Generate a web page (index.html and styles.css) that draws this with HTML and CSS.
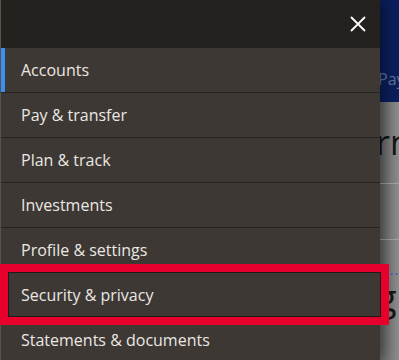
FILE: index.html
```html
<!DOCTYPE html>
<html lang="en">
<head>
    <meta charset="UTF-8">
    <meta name="viewport" content="width=device-width, initial-scale=1.0">
    <title>Menu</title>
    <link rel="stylesheet" href="styles.css">
</head>
<body>
    <div class="screen">
        <nav class="drawer">
            <div class="drawer-head">
                <button class="close" aria-label="Close menu">
                    <svg width="16" height="16" viewBox="0 0 16 16"><path d="M1 1 L15 15 M15 1 L1 15" stroke="#fff" stroke-width="1.8" fill="none"/></svg>
                </button>
            </div>
            <ul class="menu">
                <li class="item active">Accounts</li>
                <li class="item">Pay &amp; transfer</li>
                <li class="item">Plan &amp; track</li>
                <li class="item">Investments</li>
                <li class="item">Profile &amp; settings</li>
                <li class="item">Security &amp; privacy</li>
                <li class="item">Statements &amp; documents</li>
            </ul>
            <div class="highlight"></div>
        </nav>
        <div class="backdrop">
            <div class="bd-top"><span class="bd-nav">Pay &amp; transfer</span></div>
            <div class="bd-body">
                <div class="bd-title">rn</div>
                <div class="bd-rule"></div>
                <div class="bd-rule second"></div>
                <div class="bd-link">/....</div>
                <div class="bd-big">g</div>
            </div>
        </div>
    </div>
</body>
</html>
```

FILE: styles.css
```css
body { margin: 0; font-family: "Open Sans", "Noto Sans", sans-serif; }
.screen { display: flex; width: 399px; height: 360px; overflow: hidden; position: relative; }
.drawer { width: 380px; flex: none; background: #3d3834; border-left: 1px solid #57524d; box-sizing: border-box; box-shadow: 4px 0 14px rgba(0,0,0,0.45); position: relative; z-index: 2; }
.drawer-head { height: 48px; background: #25211e; display: flex; justify-content: flex-end; align-items: center; padding-right: 14px; }
.close { background: none; border: 0; padding: 0; width: 16px; height: 16px; display: flex; }
.menu { list-style: none; margin: 0; padding: 0; }
.item { height: 44px; border-bottom: 1px solid #282421; display: flex; align-items: center; padding-left: 20px; color: #ebe7e3; font-size: 16px; position: relative; }
.item.active::before { content: ""; position: absolute; left: 0; top: 0; bottom: 0; width: 4px; background: #3a8ff0; }
.highlight { position: absolute; left: -1px; top: 264px; width: 389px; height: 61px; border: 8px solid #e8002d; box-sizing: border-box; box-shadow: inset 0 0 0 1px #1e1b19; z-index: 3; }
.backdrop { flex: 1; overflow: hidden; display: flex; flex-direction: column; }
.bd-top { height: 102px; background: #0a1f5c; display: flex; align-items: flex-end; padding-bottom: 12px; box-sizing: border-box; }
.bd-nav { color: #6373a0; font-size: 16px; white-space: nowrap; margin-left: -2px; }
.bd-body { flex: 1; background: linear-gradient(to right, #6c6c6c, #8e8e8e); display: flex; flex-direction: column; }
.bd-title { font-size: 34px; color: #151515; white-space: nowrap; margin: 20px 0 0 -4px; line-height: 40px; }
.bd-rule { height: 1px; background: #a6a6a6; margin-top: 21px; }
.bd-rule.second { margin-top: 55px; }
.bd-link { color: #2e55c6; font-size: 14px; margin: 22px 0 0 -1px; line-height: 16px; letter-spacing: 1px; white-space: nowrap; }
.bd-big { font-size: 36px; color: #151515; line-height: 40px; margin: 0 0 0 -3px; }
```
